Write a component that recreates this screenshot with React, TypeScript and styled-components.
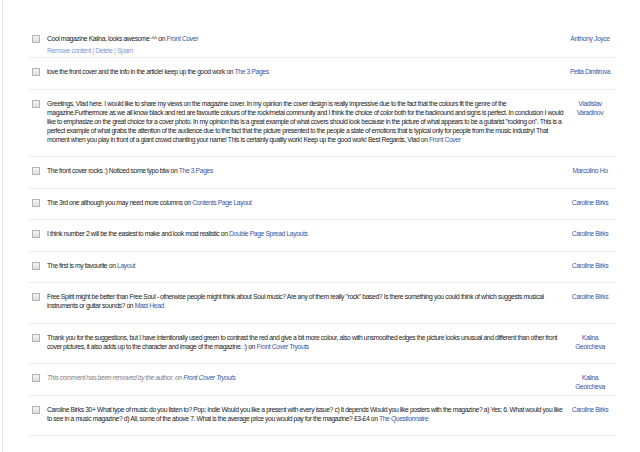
import React from "react";
import styled, { createGlobalStyle } from "styled-components";

const GlobalStyle = createGlobalStyle`
  html, body {
    margin: 0;
    padding: 0;
    background: #ffffff;
  }
  body {
    font-family: "Liberation Sans", Arial, sans-serif;
    font-size: 6.8px;
    letter-spacing: -0.4px;
    color: #222222;
  }
`;

const Frame = styled.div`
  margin-left: 2px;
  border-left: 1px solid #e2e2e2;
  min-height: 452px;
  box-sizing: border-box;
  padding-top: 25px;
`;

const List = styled.div`
  margin-left: 25px;
  width: 587px;
`;

const Row = styled.div`
  display: grid;
  grid-template-columns: 19px 1fr 50px;
  align-items: start;
  padding-top: 9px;
  border-bottom: 1px solid #eeeeee;
  line-height: 9px;
`;

const Check = styled.span`
  display: block;
  width: 6px;
  height: 6px;
  margin: 1px 0 0 4px;
  border: 1px solid #b4b4b4;
  background: linear-gradient(#f4f4f4, #dedede);
`;

const Body = styled.div<{ $removed?: boolean; $tight?: boolean }>`
  padding-bottom: ${(p) => (p.$tight ? 2 : 12.5)}px;
  font-style: ${(p) => (p.$removed ? "italic" : "normal")};
  color: ${(p) => (p.$removed ? "#808080" : "#222222")};
`;

const Link = styled.a`
  color: #3459a8;
  text-decoration: none;
`;

const Actions = styled.div`
  margin-top: 3px;
  color: #9aa6c0;
`;

const ActionLink = styled.a`
  color: #7d9bd2;
  text-decoration: none;
`;

const Author = styled.a`
  display: block;
  padding: 0 4px 3px;
  text-align: center;
  color: #3459a8;
  text-decoration: none;
`;

type Comment = {
  text: string;
  post: string;
  author: string;
  removed?: boolean;
  actions?: boolean;
};

const comments: Comment[] = [
  {
    text: "Cool magazine Kalina, looks awesome ^^",
    post: "Front Cover",
    author: "Anthony Joyce",
    actions: true,
  },
  {
    text: "love the front cover and the info in the article! keep up the good work",
    post: "The 3 Pages",
    author: "Petia Dimitrova",
  },
  {
    text:
      "Greetings, Vlad here. I would like to share my views on the magazine cover. In my opinion the cover design is really impressive due to the fact that the colours fit the genre of the magazine.Furthermore as we all know black and red are favourite colours of the rock/metal community and I think the choice of color both for the backround and signs is perfect. In conclusion I would like to emphasize on the great choice for a cover photo. In my opinion this is a great example of what covers should look because in the picture of what appears to be a guitarist \"rocking on\". This is a perfect example of what grabs the attention of the audience due to the fact that the picture presented to the people a state of emotions that is typical only for people from the music industry! That moment when you play in front of a giant crowd chanting your name! This is certainly quality work! Keep up the good work! Best Regards, Vlad",
    post: "Front Cover",
    author: "Vladislav Varadinov",
  },
  {
    text: "The front cover rocks :) Noticed some typo btw",
    post: "The 3 Pages",
    author: "Marcolino Ho",
  },
  {
    text: "The 3rd one although you may need more columns",
    post: "Contents Page Layout",
    author: "Caroline Birks",
  },
  {
    text: "I think number 2 will be the easiest to make and look most realistic",
    post: "Double Page Spread Layouts",
    author: "Caroline Birks",
  },
  {
    text: "The first is my favourite",
    post: "Layout",
    author: "Caroline Birks",
  },
  {
    text:
      "Free Spirit might be better than Free Soul - otherwise people might think about Soul music? Are any of them really \"rock\" based? Is there something you could think of which suggests musical instruments or guitar sounds?",
    post: "Mast Head",
    author: "Caroline Birks",
  },
  {
    text:
      "Thank you for the suggestions, but I have intentionally used green to contrast the red and give a bit more colour, also with unsmoothed edges the picture looks unusual and different than other front cover pictures, it also adds up to the character and image of the magazine. :)",
    post: "Front Cover Tryouts",
    author: "Kalina Georcheva",
  },
  {
    text: "This comment has been removed by the author.",
    post: "Front Cover Tryouts",
    author: "Kalina Georcheva",
    removed: true,
  },
  {
    text:
      "Caroline Birks 30+ What type of music do you listen to? Pop; Indie Would you like a present with every issue? c) It depends Would you like posters with the magazine? a) Yes; 6. What would you like to see in a music magazine? d) All, some of the above 7. What is the average price you would pay for the magazine? £3-£4",
    post: "The Questionnaire",
    author: "Caroline Birks",
  },
];

export default function App() {
  return (
    <>
      <GlobalStyle />
      <Frame>
        <List>
          {comments.map((c, i) => (
            <Row key={i}>
              <Check />
              <Body $removed={c.removed} $tight={c.actions}>
                {c.text} on <Link href="#">{c.post}</Link>
                {c.actions && (
                  <Actions>
                    <ActionLink href="#">Remove content</ActionLink> |{" "}
                    <ActionLink href="#">Delete</ActionLink> |{" "}
                    <ActionLink href="#">Spam</ActionLink>
                  </Actions>
                )}
              </Body>
              <Author href="#">{c.author}</Author>
            </Row>
          ))}
        </List>
      </Frame>
    </>
  );
}
